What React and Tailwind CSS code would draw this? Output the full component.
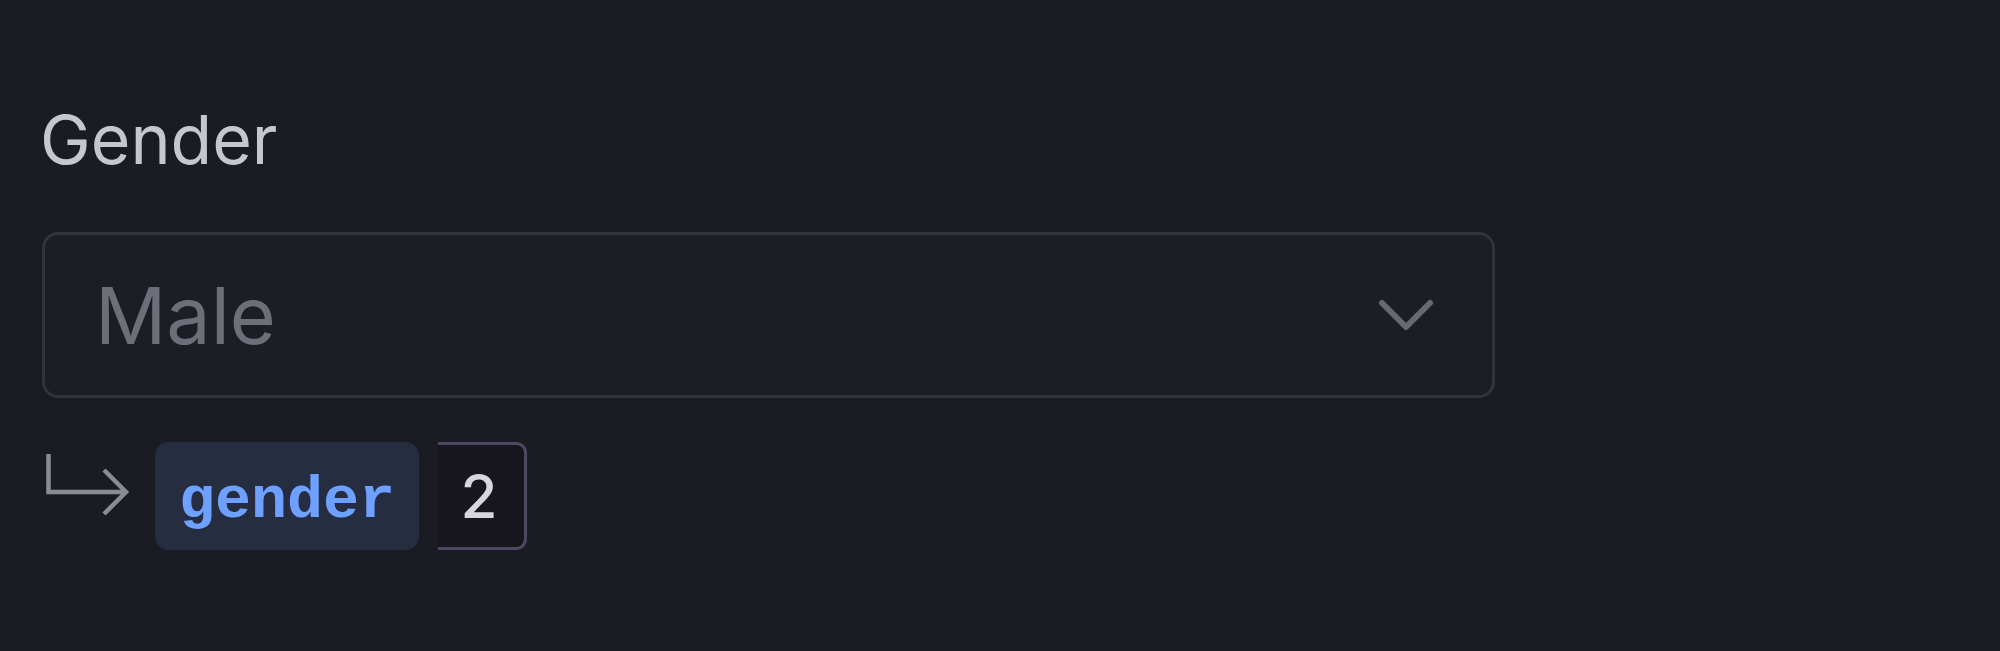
import React from "react";

const ChevronIcon = () => (
  <svg width="56" height="34" viewBox="0 0 56 34" fill="none">
    <path d="M4 5 L28 29 L52 5" stroke="#686872" strokeWidth="6" strokeLinecap="round" strokeLinejoin="round" />
  </svg>
);

const MapArrow = () => (
  <svg width="90" height="108" viewBox="0 0 90 108" fill="none" className="shrink-0">
    <path d="M6.5 12 V50 H84" stroke="#8b8b93" strokeWidth="4.5" strokeLinejoin="miter" />
    <path d="M62 28 L84 50 L62 72" stroke="#8b8b93" strokeWidth="4.5" strokeLinejoin="miter" />
  </svg>
);

export default function App() {
  return (
    <div className="min-h-screen w-full bg-[#1b1b23] px-[42px] pt-[105px] font-['Inter',sans-serif]">
      <div className="ml-[-2px] text-[68px] leading-none text-[#c6c6cf]">Gender</div>

      <div className="mt-[59px] flex h-[166px] w-[1453px] items-center justify-between rounded-[16px] border-[3px] border-[#33333e] bg-[#1d1d26] pl-[50px] pr-[58px]">
        <span className="text-[79px] leading-none text-[#6e6e78]">Male</span>
        <ChevronIcon />
      </div>

      <div className="mt-[44px] flex h-[108px] items-center">
        <MapArrow />
        <div className="ml-[23px] flex h-[108px] items-center rounded-[14px] bg-[#272d40] px-[24px] pt-[10px] font-['Liberation_Mono',monospace] text-[60px] font-bold leading-none text-[#6ea1ff]">
          gender
        </div>
        <div className="ml-[19px] flex h-[108px] w-[89px] items-center justify-center rounded-r-[11px] border-y-[3px] border-r-[3px] border-l-0 border-[#4d4963] bg-[#16161c] pr-[4px] text-[60px] font-medium leading-none text-[#d6d6dc]">
          2
        </div>
      </div>
    </div>
  );
}
